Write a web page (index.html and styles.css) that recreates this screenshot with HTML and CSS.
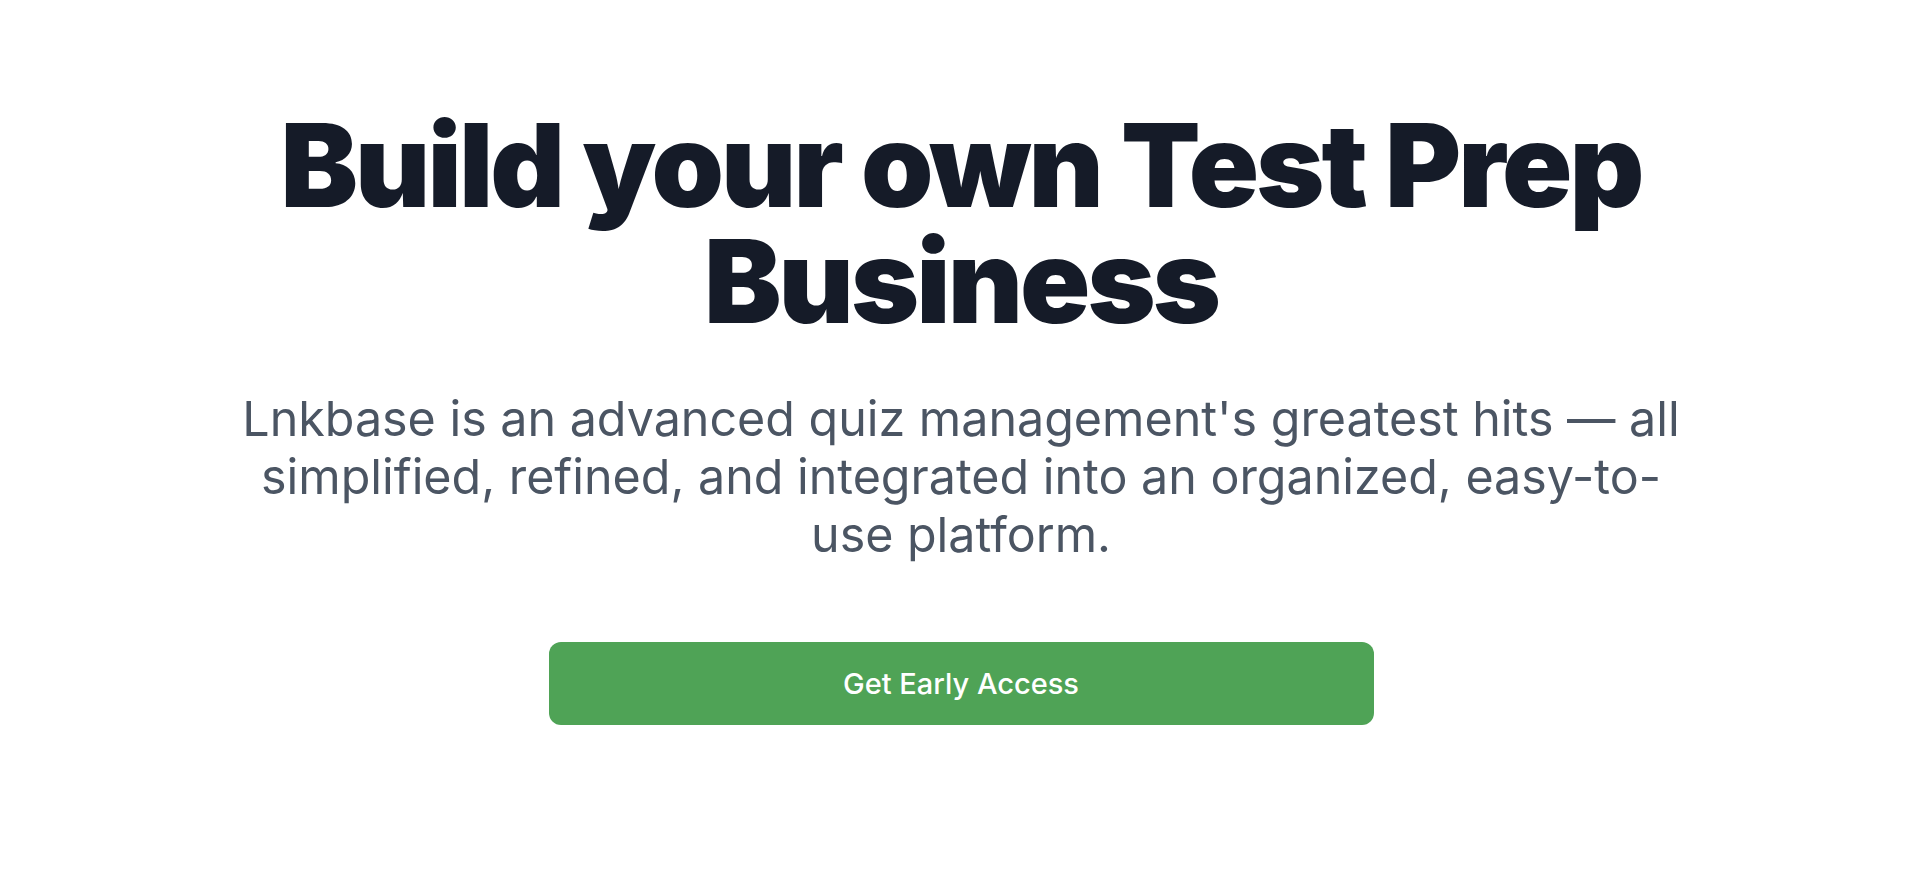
FILE: index.html
```html
<!DOCTYPE html>
<html lang="en">
<head>
<meta charset="utf-8">
<title>Lnkbase</title>
<link rel="stylesheet" href="styles.css">
</head>
<body>
<main class="hero">
  <h1 class="hero-title">Build your own Test Prep Business</h1>
  <p class="hero-text">Lnkbase is an advanced quiz management's greatest hits — all simplified, refined, and integrated into an organized, easy-to-use platform.</p>
  <a class="hero-button" href="#">Get Early Access</a>
</main>
</body>
</html>
```

FILE: styles.css
```css
html, body {
  margin: 0;
  padding: 0;
  background: #ffffff;
}
body {
  font-family: Inter, "Noto Sans", sans-serif;
}
.hero {
  display: flex;
  flex-direction: column;
  align-items: center;
  padding: 107px 0 0 12px;
  text-align: center;
}
.hero-title {
  margin: 0;
  max-width: 1420px;
  font-size: 116px;
  line-height: 116px;
  font-weight: 900;
  letter-spacing: -0.025em;
  color: #151b28;
}
.hero-text {
  margin: 51px 0 0;
  max-width: 1456px;
  font-size: 48.4px;
  line-height: 58px;
  font-weight: 400;
  color: #4b5563;
}
.hero-button {
  margin-top: 78px;
  width: 825px;
  height: 83px;
  display: flex;
  align-items: center;
  justify-content: center;
  background: #4fa356;
  color: #ffffff;
  border-radius: 12px;
  text-decoration: none;
  font-size: 29px;
  font-weight: 500;
}
```
